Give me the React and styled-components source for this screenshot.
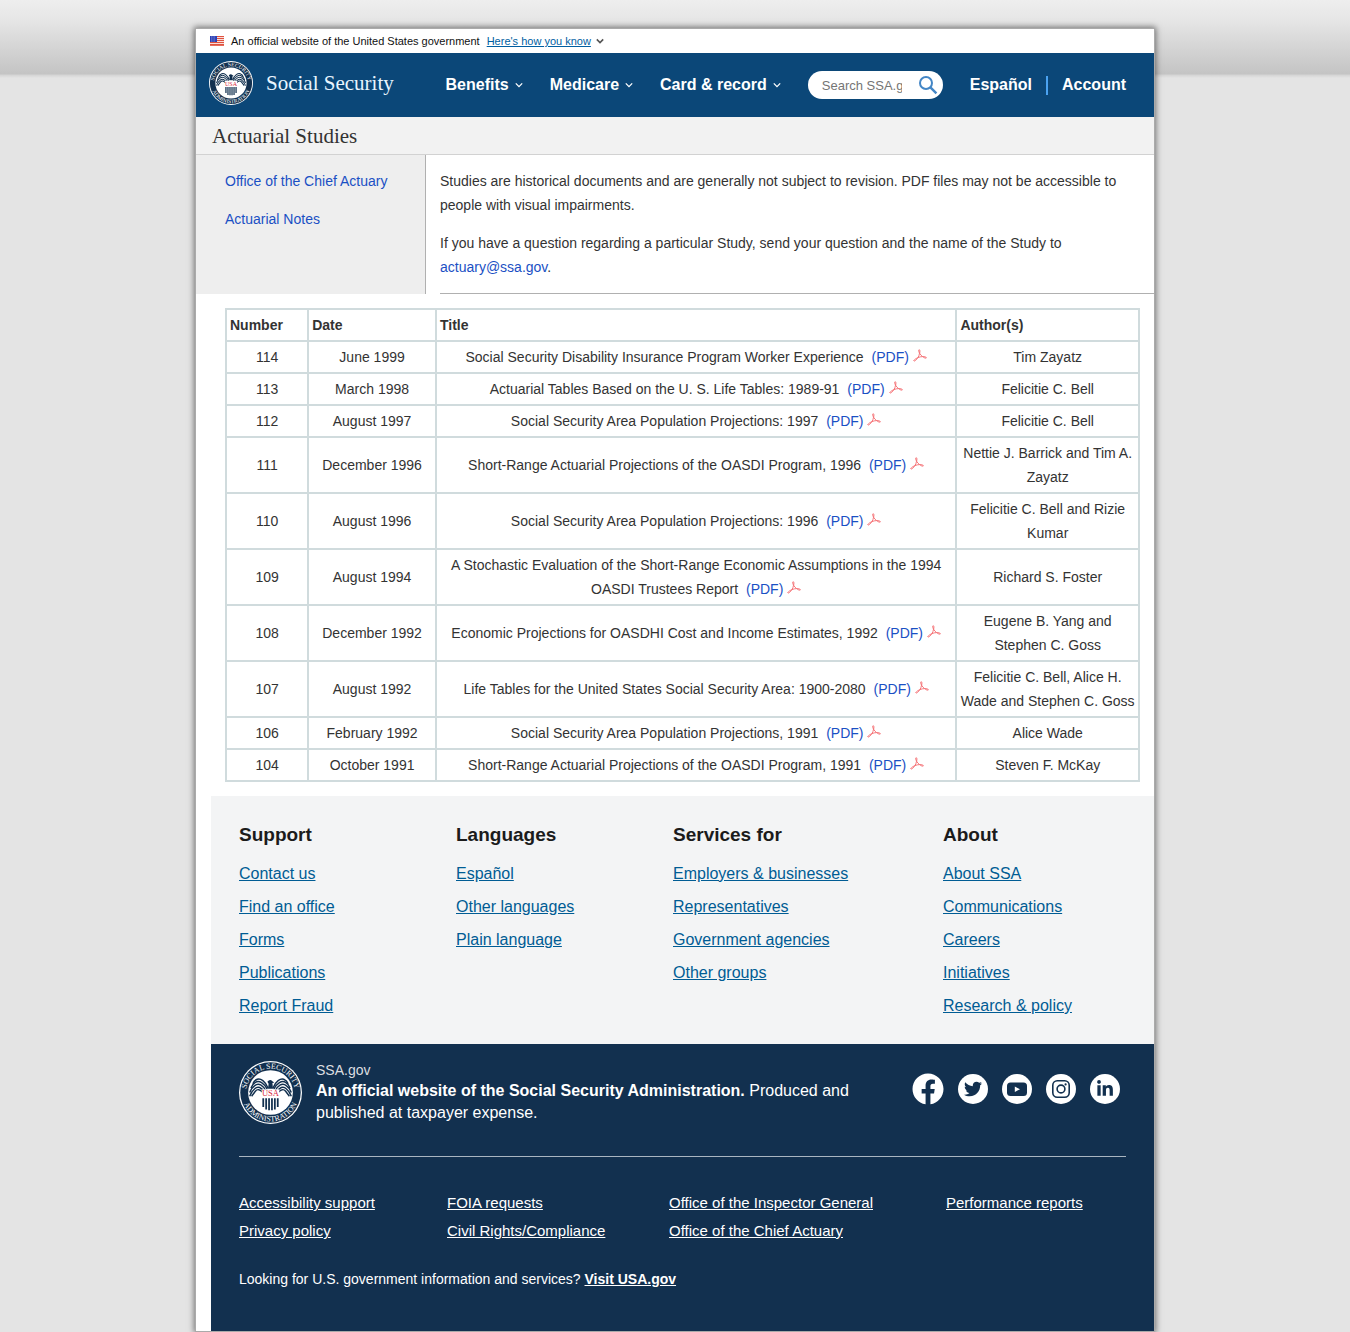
import React from "react";
import styled, { createGlobalStyle } from "styled-components";
import { FaFacebook, FaTwitter, FaLinkedinIn } from "react-icons/fa";

const sans = `"Liberation Sans", Arial, sans-serif`;
const serif = `"Liberation Serif", "Times New Roman", serif`;

const GlobalStyle = createGlobalStyle`
  *, *::before, *::after { box-sizing: border-box; }
  body {
    margin: 0;
    color: #333;
    font-family: ${sans};
    font-size: 14px;
    line-height: 24px;
    background: #e4e4e4 linear-gradient(#eee 0, #e6e6e6 20px, #c4c4c4 74px, #d4d4d4 75px, #e4e4e4 78px) no-repeat 0 0 / 100% 78px;
  }
  a { color: #1a50c4; text-decoration: none; }
  a:hover { text-decoration: underline; }
`;

const Page = styled.div`
  max-width: 960px;
  margin: 28px auto 0;
  border: 1px solid #aaa;
  background: #fff;
  box-shadow: 0 0 6px 1px rgba(0, 0, 0, 0.5);
`;

const Banner = styled.div`
  display: flex;
  align-items: center;
  height: 24px;
  padding: 0 14px;
  gap: 7px;
  color: #111;
  font-size: 11px;
`;

const BannerButton = styled.button`
  display: flex;
  align-items: center;
  gap: 5px;
  padding: 0;
  border: 0;
  background: none;
  color: #005ea2;
  font: inherit;
  cursor: pointer;
  span { text-decoration: underline; }
`;

const Header = styled.header`
  display: flex;
  align-items: center;
  justify-content: space-between;
  min-height: 64px;
  padding: 0 28px 0 13px;
  background: #0b4778;
`;

const Brand = styled.a`
  display: flex;
  align-items: center;
  gap: 13px;
  margin-bottom: 4px;
  color: #e8f5ff;
  font-family: ${serif};
  font-size: 21px;
`;

const Nav = styled.nav`
  display: flex;
  align-items: center;
  gap: 27px;
`;

const NavButton = styled.button`
  display: flex;
  align-items: center;
  gap: 6px;
  padding: 0;
  border: 0;
  background: none;
  color: #fff;
  font: bold 16px/24px ${sans};
  cursor: pointer;
`;

const Search = styled.form`
  display: flex;
  align-items: center;
  justify-content: space-between;
  width: 135px;
  height: 28px;
  padding: 0 5px 0 14px;
  border-radius: 14px;
  background: #fff;
`;

const SearchInput = styled.input`
  width: 80px;
  padding: 0;
  border: 0;
  outline: 0;
  background: none;
  font: 13px ${sans};
  &::placeholder { color: #757575; }
`;

const SearchButton = styled.button`
  display: flex;
  padding: 0;
  border: 0;
  background: none;
  cursor: pointer;
`;

const NavLinks = styled.div`
  display: flex;
  align-items: center;
`;

const NavLink = styled.a`
  color: #fff;
  font-size: 16px;
  font-weight: bold;
  & + & {
    display: flex;
    align-items: center;
    margin-left: 14px;
  }
  & + &::before {
    content: "";
    width: 2px;
    height: 19px;
    margin-right: 14px;
    background: #4ba3f2;
  }
`;

const PageTitle = styled.h1`
  margin: 0;
  padding: 1px 16px 0;
  border-bottom: 1px solid #d2d2d2;
  background: #f2f2f2;
  font: 21px/36px ${serif};
`;

const Intro = styled.div`
  display: flex;
  gap: 14px;
`;

const Sidebar = styled.aside`
  flex: 0 0 230px;
  padding: 14px 14px 14px 29px;
  border-right: 1px solid #b0b0b0;
  background: #eee;
`;

const IntroText = styled.div`
  flex: 1;
  padding: 14px 14px 14px 0;
  border-bottom: 1px solid #b0b0b0;
`;

const Paragraph = styled.p`
  margin: 0;
  & + & { margin-top: 14px; }
`;

const Studies = styled.table`
  width: calc(100% - 43px);
  margin: 14px 14px 14px 29px;
  border-collapse: collapse;
  table-layout: fixed;
  text-align: center;
  th, td {
    padding: 3px;
    border: 2px solid #d0dbdd;
  }
  th { text-align: left; }
`;

const Col = styled.col`
  width: ${(p) => p.$width};
`;

const PdfLink = styled.a`
  margin-left: 4px;
  svg { margin-left: 4px; }
`;

const Footer = styled.footer`
  margin-left: 15px;
`;

const FooterNav = styled.nav`
  display: grid;
  grid-template-columns: 217fr 217fr 270fr 183fr;
  padding: 28px 28px 22px;
  background: #f3f4f5;
`;

const FooterHeading = styled.h2`
  margin: 0 0 11px;
  color: #1b1b1b;
  font-size: 19px;
  line-height: 22px;
`;

const List = styled.ul`
  margin: 0;
  padding: 0;
  list-style: none;
`;

const FooterLink = styled.a`
  display: block;
  color: #005c94;
  font-size: 16px;
  line-height: 33px;
  text-decoration: underline;
`;

const Identifier = styled.div`
  padding: 17px 28px 40px;
  background: #12304f;
  color: #fff;
`;

const IdentifierTop = styled.div`
  display: flex;
  gap: 14px;
  padding-bottom: 32px;
  border-bottom: 1px solid #a9b5c1;
`;

const Agency = styled.div`
  flex: 1;
  font-size: 16px;
  line-height: 22px;
`;

const AgencyDomain = styled.div`
  color: #dcdee0;
  font-size: 14px;
  line-height: 19px;
`;

const AgencyText = styled.p`
  max-width: 540px;
  margin: 0;
`;

const Social = styled.div`
  display: flex;
  gap: 14px;
  margin: 13px 6px 0 0;
`;

const SocialLink = styled.a`
  display: flex;
  align-items: center;
  justify-content: center;
  width: ${(p) => (p.$cutout ? "32px" : "30px")};
  height: 30px;
  border-radius: 50%;
  background: ${(p) => (p.$cutout ? "none" : "#fff")};
  color: ${(p) => (p.$cutout ? "#fff" : "#12304f")};
  svg { flex: none; }
`;

const LegalLinks = styled.div`
  display: grid;
  grid-template-columns: 208fr 222fr 277fr 180fr;
  margin: 32px 0 22px;
`;

const LegalLink = styled.a`
  display: block;
  color: #fff;
  font-size: 15px;
  line-height: 28px;
  text-decoration: underline;
`;

const UsaLink = styled.a`
  color: #fff;
  font-weight: bold;
  text-decoration: underline;
`;

const Chevron = ({ size, color, weight }) => (
  <svg width={size} height={size} viewBox="0 0 8 8" aria-hidden="true">
    <path d="M.8 2.400 4 5.600 7.200 2.400" fill="none" stroke={color} strokeWidth={weight} />
  </svg>
);

const Flag = () => (
  <svg width="14" height="10" viewBox="0 0 14 10" aria-hidden="true">
    <rect width="14" height="10" fill="#fff" />
    {[0, 2, 4, 6, 8].map((y) => (
      <rect key={y} y={y} width="14" height="1.2" fill="#e0523f" />
    ))}
    <rect y="9.2" width="14" height=".8" fill="#e0523f" />
    <rect width="7" height="6" fill="#2a3fb5" />
    {[1, 3, 5].map((y) => (
      <path key={y} d={`M1 ${y}h5`} stroke="#fff" strokeWidth=".6" strokeDasharray=".7 1" />
    ))}
  </svg>
);

const feathers = [
  "M46 43C42 32 34 27 29 29Q24 31 22 36",
  "M45 45C40 35 32 30 26 34Q21 37 19 43",
  "M43 48C38 38 31 34 25 39Q19 43 17 50",
  "M40 49C36 42 30 39 25 44Q20 48 17 56",
  "M37 49C33 45 29 44 26 48L20 56",
];

const Seal = ({ size, id }) => (
  <svg width={size} height={size} viewBox="0 0 100 100" role="img" aria-label="Social Security Administration seal">
    <defs>
      <path id={`${id}-top`} d="M12 60A39 39 0 1 1 88 60" />
      <path id={`${id}-bottom`} d="M4 50A46 46 0 0 0 96 50" />
    </defs>
    <circle cx="50" cy="50" r="50" fill="#fff" />
    <circle cx="50" cy="50" r="48" fill="#12304f" />
    <circle cx="50" cy="50" r="35.500" fill="#fff" />
    <g fill="#fff" fontFamily="Liberation Serif, serif" fontSize="12.500" textAnchor="middle">
      <text><textPath href={`#${id}-top`} startOffset="50%">SOCIAL SECURITY</textPath></text>
      <text><textPath href={`#${id}-bottom`} startOffset="50%">ADMINISTRATION</textPath></text>
    </g>
    {["", "translate(100 0) scale(-1 1)"].map((t) => (
      <g key={t} transform={t} fill="none" stroke="#12304f" strokeWidth="2.300">
        {feathers.map((d) => <path key={d} d={d} />)}
      </g>
    ))}
    <path d="M45 33q4-5 8-1l3 2-3 1 1 9h-8l1-8z" fill="#12304f" />
    <path d="M36 45h28v12H36z" fill="#fff" />
    <text x="50" y="56" textAnchor="middle" fontFamily="Liberation Serif, serif" fontSize="13.500" fill="#d8283c">USA</text>
    <path d="M38.500 59v14M43.100 59v18M47.700 59v19M52.300 59v19M56.900 59v18M61.500 59v14" stroke="#12304f" strokeWidth="2.800" />
  </svg>
);

const SearchIcon = () => (
  <svg width="20" height="20" viewBox="0 0 20 20" aria-hidden="true">
    <circle cx="8" cy="8" r="6" fill="none" stroke="#4386c6" strokeWidth="2" />
    <path d="m12.4 12.4 6 6" stroke="#4386c6" strokeWidth="2.4" />
  </svg>
);

const PdfIcon = () => (
  <svg width="14" height="13" viewBox="0 0 14 13" aria-hidden="true">
    <path
      d="M6.300.6C5.300.8 5.700 2.500 6.500 4.200 6.300 6 5.700 7.400 4.900 8.700 3 9.400 1.200 10.700.7 11.700.9 12.400 2 12 2.800 11.200 3.600 10.400 4.300 9.400 4.900 8.600 6.300 8 8 7.600 9.600 7.600 11 8.800 12.600 9.500 13.300 9 13.800 8.200 11.800 7.600 9.600 7.600 8.300 6.700 7.200 5.500 6.600 4.200 7 2.700 7.100 1 6.300.6Z"
      fill="none" stroke="#f4696d" strokeWidth=".9"
    />
  </svg>
);

const YoutubeIcon = ({ size }) => (
  <svg width={size} height={size} viewBox="0 0 20 20" aria-hidden="true">
    <rect y="3.500" width="20" height="13.500" rx="3.500" fill="currentColor" />
    <path d="M7.800 7.500v5.500l5.200-2.750z" fill="#fff" />
  </svg>
);

const InstagramIcon = ({ size }) => (
  <svg width={size} height={size} viewBox="0 0 18 18" aria-hidden="true">
    <g fill="none" stroke="currentColor" strokeWidth="1.600">
      <rect x=".8" y=".8" width="16.400" height="16.400" rx="4.500" />
      <circle cx="9" cy="9" r="3.900" />
    </g>
    <circle cx="13.600" cy="4.400" r="1.100" fill="currentColor" />
  </svg>
);

const studies = [
  ["114", "June 1999", "Social Security Disability Insurance Program Worker Experience", "Tim Zayatz"],
  ["113", "March 1998", "Actuarial Tables Based on the U. S. Life Tables: 1989-91", "Felicitie C. Bell"],
  ["112", "August 1997", "Social Security Area Population Projections: 1997", "Felicitie C. Bell"],
  ["111", "December 1996", "Short-Range Actuarial Projections of the OASDI Program, 1996", "Nettie J. Barrick and Tim A. Zayatz"],
  ["110", "August 1996", "Social Security Area Population Projections: 1996", "Felicitie C. Bell and Rizie Kumar"],
  ["109", "August 1994", "A Stochastic Evaluation of the Short-Range Economic Assumptions in the 1994 OASDI Trustees Report", "Richard S. Foster"],
  ["108", "December 1992", "Economic Projections for OASDHI Cost and Income Estimates, 1992", "Eugene B. Yang and Stephen C. Goss"],
  ["107", "August 1992", "Life Tables for the United States Social Security Area: 1900-2080", "Felicitie C. Bell, Alice H. Wade and Stephen C. Goss"],
  ["106", "February 1992", "Social Security Area Population Projections, 1991", "Alice Wade"],
  ["104", "October 1991", "Short-Range Actuarial Projections of the OASDI Program, 1991", "Steven F. McKay"],
];

const footerGroups = [
  ["Support", ["Contact us", "Find an office", "Forms", "Publications", "Report Fraud"]],
  ["Languages", ["Español", "Other languages", "Plain language"]],
  ["Services for", ["Employers & businesses", "Representatives", "Government agencies", "Other groups"]],
  ["About", ["About SSA", "Communications", "Careers", "Initiatives", "Research & policy"]],
];

const legalGroups = [
  ["Accessibility support", "Privacy policy"],
  ["FOIA requests", "Civil Rights/Compliance"],
  ["Office of the Inspector General", "Office of the Chief Actuary"],
  ["Performance reports"],
];

const socials = [
  ["Facebook", FaFacebook, 32, true],
  ["Twitter", FaTwitter, 18],
  ["YouTube", YoutubeIcon, 20],
  ["Instagram", InstagramIcon, 18],
  ["LinkedIn", FaLinkedinIn, 18],
];

export default function App() {
  return (
    <>
      <GlobalStyle />
      <Page>
        <Banner>
          <Flag />
          <span>An official website of the United States government</span>
          <BannerButton type="button">
            <span>Here's how you know</span>
            <Chevron size={8} color="#555" weight={1.6} />
          </BannerButton>
        </Banner>
        <Header>
          <Brand href="#home">
            <Seal size={44} id="header-seal" />
            Social Security
          </Brand>
          <Nav aria-label="Main">
            {["Benefits", "Medicare", "Card & record"].map((label) => (
              <NavButton type="button" key={label}>
                {label}
                <Chevron size={8} color="#fff" weight={1.3} />
              </NavButton>
            ))}
            <Search role="search" onSubmit={(e) => e.preventDefault()}>
              <SearchInput type="text" aria-label="Search SSA.gov" placeholder="Search SSA.gov" />
              <SearchButton type="submit" aria-label="Search"><SearchIcon /></SearchButton>
            </Search>
            <NavLinks>
              <NavLink href="#espanol">Español</NavLink>
              <NavLink href="#account">Account</NavLink>
            </NavLinks>
          </Nav>
        </Header>
        <PageTitle>Actuarial Studies</PageTitle>
        <main>
          <Intro>
            <Sidebar>
              <Paragraph><a href="#oact">Office of the Chief Actuary</a></Paragraph>
              <Paragraph><a href="#notes">Actuarial Notes</a></Paragraph>
            </Sidebar>
            <IntroText>
              <Paragraph>
                Studies are historical documents and are generally not subject to revision. PDF files may not be
                accessible to people with visual impairments.
              </Paragraph>
              <Paragraph>
                If you have a question regarding a particular Study, send your question and the name of the Study
                to <a href="mailto:actuary@ssa.gov">actuary@ssa.gov</a>.
              </Paragraph>
            </IntroText>
          </Intro>
          <Studies>
            <colgroup>
              <Col $width="9%" />
              <Col $width="14%" />
              <Col $width="57%" />
              <Col $width="20%" />
            </colgroup>
            <thead>
              <tr>
                <th scope="col">Number</th>
                <th scope="col">Date</th>
                <th scope="col">Title</th>
                <th scope="col">Author(s)</th>
              </tr>
            </thead>
            <tbody>
              {studies.map(([number, date, title, authors]) => (
                <tr key={number}>
                  <td>{number}</td>
                  <td>{date}</td>
                  <td>{title} <PdfLink href={`#study-${number}`}>(PDF)<PdfIcon /></PdfLink></td>
                  <td>{authors}</td>
                </tr>
              ))}
            </tbody>
          </Studies>
        </main>
        <Footer>
          <FooterNav aria-label="Footer">
            {footerGroups.map(([heading, links]) => (
              <section key={heading}>
                <FooterHeading>{heading}</FooterHeading>
                <List>
                  {links.map((link) => (
                    <li key={link}><FooterLink href="#footer">{link}</FooterLink></li>
                  ))}
                </List>
              </section>
            ))}
          </FooterNav>
          <Identifier>
            <IdentifierTop>
              <Seal size={63} id="footer-seal" />
              <Agency>
                <AgencyDomain>SSA.gov</AgencyDomain>
                <AgencyText>
                  <strong>An official website of the Social Security Administration.</strong> Produced and published
                  at taxpayer expense.
                </AgencyText>
              </Agency>
              <Social>
                {socials.map(([name, Icon, size, cutout]) => (
                  <SocialLink key={name} href="#social" aria-label={name} $cutout={cutout}>
                    <Icon size={size} />
                  </SocialLink>
                ))}
              </Social>
            </IdentifierTop>
            <LegalLinks>
              {legalGroups.map((links) => (
                <List key={links[0]}>
                  {links.map((link) => (
                    <li key={link}><LegalLink href="#legal">{link}</LegalLink></li>
                  ))}
                </List>
              ))}
            </LegalLinks>
            <div>
              Looking for U.S. government information and services? <UsaLink href="#usa">Visit USA.gov</UsaLink>
            </div>
          </Identifier>
        </Footer>
      </Page>
    </>
  );
}
